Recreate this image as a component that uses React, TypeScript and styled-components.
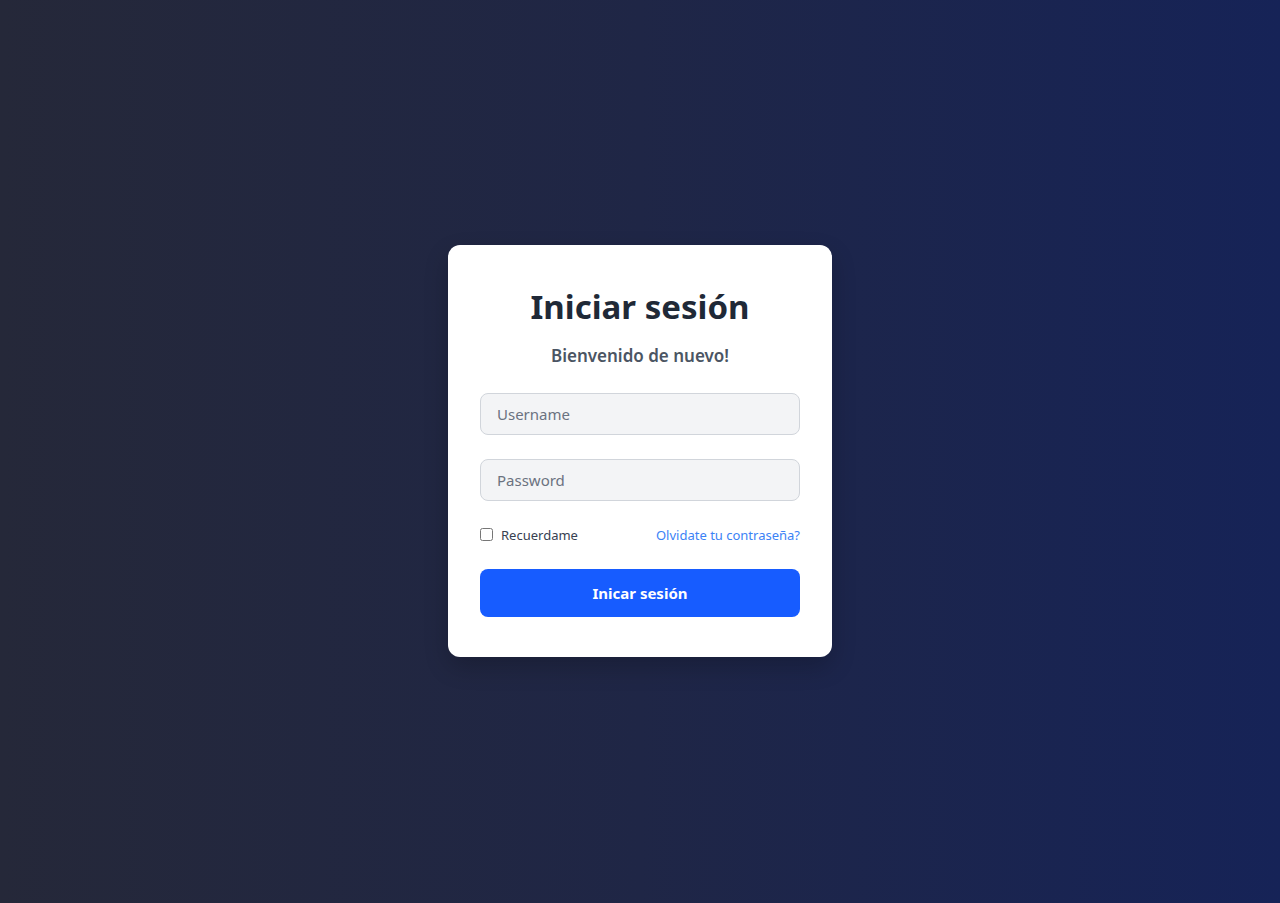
import React from "react";
import styled, { createGlobalStyle } from "styled-components";

const Global = createGlobalStyle`
  * { box-sizing: border-box; }
  html, body { margin: 0; padding: 0; }
  body {
    font-family: "Noto Sans", "Open Sans", sans-serif;
    background: linear-gradient(90deg, #252839 0%, #1f2646 50%, #162357 100%);
    min-height: 100vh;
  }
`;

const Page = styled.main`
  min-height: 903px;
  padding-bottom: 2px;
  display: flex;
  align-items: center;
  justify-content: center;
`;

const Card = styled.form`
  width: 384px;
  background: #ffffff;
  border-radius: 12px;
  padding: 40px 32px;
  display: flex;
  flex-direction: column;
  box-shadow: 0 10px 25px rgba(0, 0, 0, 0.2);
`;

const Title = styled.h1`
  margin: 0;
  font-size: 33px;
  line-height: 43px;
  font-weight: 700;
  color: #1f2937;
  text-align: center;
`;

const Subtitle = styled.p`
  margin: 14px 0 0;
  font-size: 17px;
  line-height: 27px;
  font-weight: 600;
  color: #4b5563;
  text-align: center;
`;

const Input = styled.input`
  margin-top: 24px;
  height: 42px;
  width: 100%;
  padding: 0 16px;
  border: 1px solid #d1d5db;
  border-radius: 8px;
  background: #f3f4f6;
  font-family: inherit;
  font-size: 15px;
  color: #111827;
  outline: none;
  &::placeholder { color: #6b7280; }
`;

const OptionsRow = styled.div`
  margin-top: 24px;
  height: 20px;
  display: flex;
  align-items: center;
  justify-content: space-between;
`;

const Remember = styled.label`
  display: flex;
  align-items: center;
  gap: 8px;
  font-size: 13px;
  color: #374151;
  input { margin: 0; width: 13px; height: 13px; }
`;

const Link = styled.a`
  font-size: 13px;
  color: #3b82f6;
  text-decoration: none;
`;

const Submit = styled.button`
  margin-top: 24px;
  height: 48px;
  width: 100%;
  border: none;
  border-radius: 8px;
  background: #175cff;
  color: #ffffff;
  font-family: inherit;
  font-size: 15px;
  font-weight: 700;
  cursor: pointer;
`;

export default function App() {
  return (
    <>
      <Global />
      <Page>
        <Card onSubmit={(e) => e.preventDefault()}>
          <Title>Iniciar sesión</Title>
          <Subtitle>Bienvenido de nuevo!</Subtitle>
          <Input type="text" placeholder="Username" />
          <Input type="password" placeholder="Password" />
          <OptionsRow>
            <Remember>
              <input type="checkbox" />
              Recuerdame
            </Remember>
            <Link href="#">Olvidate tu contraseña?</Link>
          </OptionsRow>
          <Submit type="submit">Inicar sesión</Submit>
        </Card>
      </Page>
    </>
  );
}
